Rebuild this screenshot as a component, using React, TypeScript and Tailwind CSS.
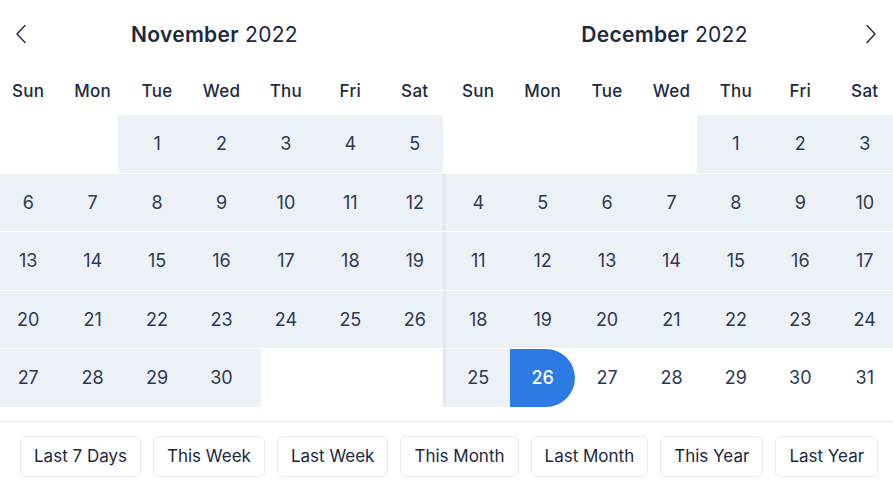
import React from "react";

const WEEK = ["Sun", "Mon", "Tue", "Wed", "Thu", "Fri", "Sat"];

function Chevron({ dir }: { dir: "left" | "right" }) {
  return (
    <svg width="12" height="20" viewBox="0 0 12 20" fill="none" stroke="#1e2b43" strokeWidth="1.4" strokeLinecap="round" strokeLinejoin="round">
      {dir === "left" ? <path d="M10 1.5 L2 10 L10 18.5" /> : <path d="M2 1.5 L10 10 L2 18.5" />}
    </svg>
  );
}

type CalProps = {
  month: string;
  offset: number;
  days: number;
  rangeEnd: number;
  selected?: number;
  side: "left" | "right";
};

function Calendar({ month, offset, days, rangeEnd, selected, side }: CalProps) {
  const cells: (number | null)[] = [];
  for (let i = 0; i < offset; i++) cells.push(null);
  for (let d = 1; d <= days; d++) cells.push(d);
  while (cells.length % 7 !== 0) cells.push(null);

  return (
    <div className={side === "left" ? "w-[443px] overflow-hidden" : "flex-1 overflow-hidden"}>
      <div className={side === "left" ? "w-[451px] ml-[-4px]" : "w-[451px] ml-[3px]"}>
        <div className="relative h-[69px] flex items-center justify-center pr-[14px]">
          {side === "left" && (
            <div className="absolute left-[19px] top-[24px]">
              <Chevron dir="left" />
            </div>
          )}
          {side === "right" && (
            <div className="absolute left-[419px] top-[24px]">
              <Chevron dir="right" />
            </div>
          )}
          <div className="text-[21px] text-[#1b2840] tracking-[0.3px]">
            <span className="font-semibold">{month}</span> <span>2022</span>
          </div>
        </div>
        <div className="grid grid-cols-7 h-[46px] items-center">
          {WEEK.map((w) => (
            <div key={w} className="text-center text-[17px] font-medium text-[#1d2a42] tracking-[0.3px]">
              {w}
            </div>
          ))}
        </div>
        <div className="grid grid-cols-7 auto-rows-[57.5px] gap-y-px">
          {cells.map((d, i) => {
            const inRange = d !== null && d <= rangeEnd;
            const isSel = d !== null && d === selected;
            const isSun = i % 7 === 0;
            return (
              <div key={i} className="relative flex items-center justify-center">
                {inRange && !isSel && (
                  <span className="absolute inset-y-0 left-[-7px] right-[-7px] bg-[#ecf0f7]" />
                )}
                {d !== null && isSun && side === "right" && (
                  <span className="absolute inset-y-0 left-[-3px] w-[3px] bg-[#e2e6ed] z-[6]" />
                )}
                {isSel && (
                  <span className="absolute inset-0 bg-[#2c7be2] rounded-r-[29px] z-[5]" />
                )}
                {d !== null && (
                  <span
                    className={
                      "relative z-10 text-[18px] " +
                      (isSel ? "text-white font-medium" : "text-[#2c3a52]")
                    }
                  >
                    {d}
                  </span>
                )}
              </div>
            );
          })}
        </div>
      </div>
    </div>
  );
}

const PRESETS = ["Last 7 Days", "This Week", "Last Week", "This Month", "Last Month", "This Year", "Last Year"];

export default function App() {
  return (
    <div className="w-[893px] h-[490px] bg-white overflow-hidden font-['Inter',sans-serif]">
      <div className="flex h-[421px]">
        <Calendar month="November" offset={2} days={30} rangeEnd={30} side="left" />
        <Calendar month="December" offset={4} days={31} rangeEnd={26} selected={26} side="right" />
      </div>
      <div className="border-t border-[#e7ebf1] flex gap-[12px] pl-[20px] pt-[14px]">
        {PRESETS.map((p) => (
          <button
            key={p}
            className="h-[41px] px-[13px] rounded-[6px] border border-[#e6eaf1] bg-white text-[17px] text-[#1c2840] whitespace-nowrap"
          >
            {p}
          </button>
        ))}
      </div>
    </div>
  );
}
